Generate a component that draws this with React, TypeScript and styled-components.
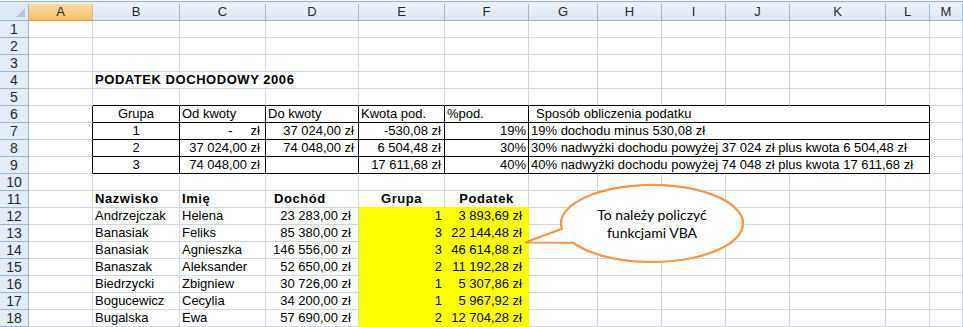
import styled, { createGlobalStyle } from "styled-components";

const GlobalStyle = createGlobalStyle`
  html, body {
    margin: 0;
    padding: 0;
    background: #ffffff;
  }
  body {
    font-family: "Liberation Sans", Arial, sans-serif;
    overflow: hidden;
  }
`;

type Line = "grid" | "black" | "fill";
type Align = "left" | "center" | "right";

type CellDef = {
  v?: string;
  align?: Align;
  bold?: boolean;
  span?: number;
  fill?: boolean;
  pl?: number;
  pr?: number;
  r?: Line;
  b?: Line;
};

const COLUMNS = ["A", "B", "C", "D", "E", "F", "G", "H", "I", "J", "K", "L", "M"];
const WIDTHS = [64, 87, 86, 93, 86, 84, 69, 64, 64, 64, 96, 44];

const lineColor: Record<Line, string> = {
  grid: "#d0d7e5",
  black: "#000000",
  fill: "#ffff00",
};

const blank = (n: number, extra: CellDef = {}): CellDef[] =>
  Array.from({ length: n }, () => ({ ...extra }));

const box: CellDef = { r: "black", b: "black" };

const brackets = [
  ["1", "-     zł", "37 024,00 zł", "-530,08 zł", "19%", "19% dochodu minus 530,08 zł"],
  ["2", "37 024,00 zł", "74 048,00 zł", "6 504,48 zł", "30%", "30% nadwyżki dochodu powyżej 37 024 zł plus kwota 6 504,48 zł"],
  ["3", "74 048,00 zł", "", "17 611,68 zł", "40%", "40% nadwyżki dochodu powyżej 74 048 zł plus kwota 17 611,68 zł"],
];

const people = [
  ["Andrzejczak", "Helena", "23 283,00 zł", "1", "3 893,69 zł"],
  ["Banasiak", "Feliks", "85 380,00 zł", "3", "22 144,48 zł"],
  ["Banasiak", "Agnieszka", "146 556,00 zł", "3", "46 614,88 zł"],
  ["Banaszak", "Aleksander", "52 650,00 zł", "2", "11 192,28 zł"],
  ["Biedrzycki", "Zbigniew", "30 726,00 zł", "1", "5 307,86 zł"],
  ["Bogucewicz", "Cecylia", "34 200,00 zł", "1", "5 967,92 zł"],
  ["Bugalska", "Ewa", "57 690,00 zł", "2", "12 704,28 zł"],
];

const rows: CellDef[][] = [
  blank(13),
  blank(13),
  blank(13),
  [{}, { v: "PODATEK DOCHODOWY 2006", bold: true, span: 3 }, ...blank(9)],
  [{}, ...blank(11, { b: "black" }), {}],
  [
    { r: "black" },
    { ...box, v: "Grupa", align: "center" },
    { ...box, v: "Od kwoty" },
    { ...box, v: "Do kwoty" },
    { ...box, v: "Kwota pod." },
    { ...box, v: "%pod." },
    { ...box, v: "Sposób obliczenia podatku", span: 6, pl: 7 },
    {},
  ],
  ...brackets.map(([g, from, to, base, pct, desc]) => [
    { r: "black" as Line },
    { ...box, v: g, align: "center" as Align },
    { ...box, v: from, align: "right" as Align, pr: 5 },
    { ...box, v: to, align: "right" as Align, pr: 4 },
    { ...box, v: base, align: "right" as Align, pr: 3 },
    { ...box, v: pct, align: "right" as Align, pr: 2 },
    { ...box, v: desc, span: 6 },
    {},
  ]),
  blank(13),
  [
    {},
    { v: "Nazwisko", bold: true },
    { v: "Imię", bold: true },
    { v: "Dochód", bold: true, pl: 8 },
    { v: "Grupa", bold: true, align: "center", b: "fill" },
    { v: "Podatek", bold: true, align: "center", b: "fill" },
    ...blank(7),
  ],
  ...people.map(([last, first, income, group, tax]) => [
    {},
    { v: last },
    { v: first },
    { v: income, align: "right" as Align, pr: 7 },
    { v: group, align: "right" as Align, pr: 2, fill: true, r: "fill" as Line, b: "fill" as Line },
    { v: tax, align: "right" as Align, pr: 6, fill: true, r: "fill" as Line, b: "fill" as Line },
    ...blank(7),
  ]),
];

export default function App() {
  return (
    <>
      <GlobalStyle />
      <Window>
        <TopStrip />
        <Sheet>
          <Corner />
          {COLUMNS.map((c) => (
            <ColHead key={c} $active={c === "A"}>
              {c}
            </ColHead>
          ))}
          {rows.map((cells, i) => [
            <RowHead key={`h${i}`}>{i + 1}</RowHead>,
            ...cells.map((cell, j) => (
              <Cell
                key={`${i}-${j}`}
                $span={cell.span ?? 1}
                $align={cell.align ?? "left"}
                $bold={!!cell.bold}
                $fill={!!cell.fill}
                $pl={cell.pl ?? 2}
                $pr={cell.pr ?? 2}
                $r={cell.r ?? "grid"}
                $b={cell.b ?? "grid"}
              >
                {cell.v}
              </Cell>
            )),
          ])}
        </Sheet>
        <Callout>
          <svg width="230" height="92" viewBox="0 0 230 92">
            <path
              d="M53.2 64.75 A91 38.5 0 1 0 41.9 50.9 L5 64.5 Z"
              fill="#ffffff"
              stroke="#f79646"
              strokeWidth="2.25"
              strokeLinejoin="miter"
            />
          </svg>
          <CalloutText>
            To należy policzyć
            <br />
            funkcjami VBA
          </CalloutText>
        </Callout>
      </Window>
    </>
  );
}

const Window = styled.div`
  position: relative;
  width: 963px;
  height: 327px;
  overflow: hidden;
  background: #ffffff;
`;

const TopStrip = styled.div`
  height: 4px;
  background: linear-gradient(
    to bottom,
    #f4f7fc 0,
    #f4f7fc 1px,
    #9fb5d2 1px,
    #9fb5d2 2px,
    #e6edf7 2px
  );
`;

const Sheet = styled.div`
  display: grid;
  grid-template-columns: 29px ${WIDTHS.map((w) => `${w}px`).join(" ")} 1fr;
  grid-auto-rows: 17px;
`;

const Corner = styled.div`
  position: relative;
  box-sizing: border-box;
  background: #dfe8f5;
  border-right: 1px solid #9eb6ce;
  border-bottom: 1px solid #9eb6ce;

  &::after {
    content: "";
    position: absolute;
    right: 3px;
    bottom: 3px;
    border-left: 9px solid transparent;
    border-bottom: 9px solid #b6c8df;
  }
`;

const ColHead = styled.div<{ $active: boolean }>`
  box-sizing: border-box;
  border-right: 1px solid ${(p) => (p.$active ? "#f1b56a" : "#9eb6ce")};
  border-bottom: 1px solid ${(p) => (p.$active ? "#f29536" : "#9eb6ce")};
  background: ${(p) =>
    p.$active
      ? "linear-gradient(to bottom, #f9dca6, #f2c264)"
      : "linear-gradient(to bottom, #eef3fa, #dde6f2)"};
  color: #1f2a36;
  font-size: 13px;
  line-height: 16px;
  text-align: center;
`;

const RowHead = styled.div`
  box-sizing: border-box;
  border-right: 1px solid #9eb6ce;
  border-bottom: 1px solid #9eb6ce;
  background: #e4ecf7;
  color: #1f2a36;
  font-size: 14px;
  line-height: 17px;
  text-align: center;
`;

const Cell = styled.div<{
  $span: number;
  $align: Align;
  $bold: boolean;
  $fill: boolean;
  $pl: number;
  $pr: number;
  $r: Line;
  $b: Line;
}>`
  grid-column: span ${(p) => p.$span};
  box-sizing: border-box;
  height: 17px;
  padding: 0 ${(p) => p.$pr}px 0 ${(p) => p.$pl}px;
  border-right: 1px solid ${(p) => lineColor[p.$r]};
  border-bottom: 1px solid ${(p) => lineColor[p.$b]};
  background: ${(p) => (p.$fill ? "#ffff00" : "#ffffff")};
  color: #000000;
  font-size: 13px;
  line-height: 16px;
  font-weight: ${(p) => (p.$bold ? 700 : 400)};
  letter-spacing: ${(p) => (p.$bold ? "0.55px" : "normal")};
  text-align: ${(p) => p.$align};
  white-space: pre;
  overflow: hidden;
`;

const Callout = styled.div`
  position: absolute;
  left: 520px;
  top: 178px;
  width: 230px;
  height: 92px;

  svg {
    display: block;
  }
`;

const CalloutText = styled.div`
  position: absolute;
  left: 41px;
  top: 7px;
  width: 182px;
  height: 77px;
  display: flex;
  align-items: center;
  justify-content: center;
  text-align: center;
  font-family: Lato, "Open Sans", sans-serif;
  font-size: 14px;
  line-height: 18px;
  color: #000000;
`;
